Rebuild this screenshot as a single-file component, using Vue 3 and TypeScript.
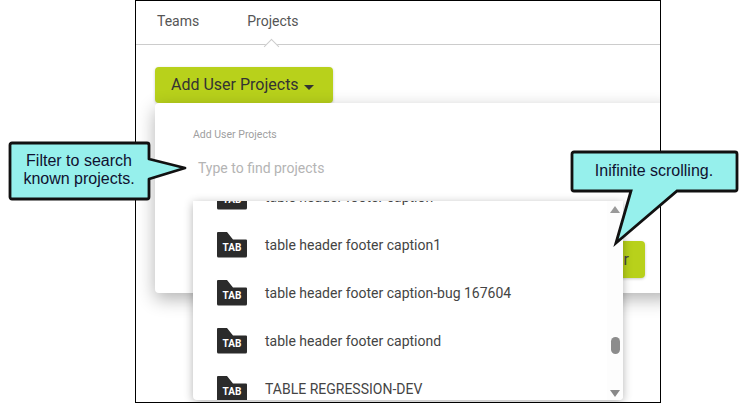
<script setup lang="ts">
const items: string[] = [
  'table header footer caption',
  'table header footer caption1',
  'table header footer caption-bug 167604',
  'table header footer captiond',
  'TABLE REGRESSION-DEV',
]
</script>

<template>
  <div class="root">
    <div class="frame">
      <nav class="tabs">
        <span class="tab">Teams</span>
        <span class="tab active">Projects</span>
      </nav>
      <div class="content">
        <button class="add">Add User Projects <i class="caret"></i></button>
        <section class="panel">
          <div class="label">Add User Projects</div>
          <div class="placeholder">Type to find projects</div>
          <div class="action"><span>r</span></div>
        </section>
        <div class="list">
          <div class="rows">
            <div v-for="item in items" :key="item" class="row">
              <span class="folder">
                <svg width="30" height="26" viewBox="0 0 30 26">
                  <path d="M1 0H10L16 7.500H29a1 1 0 0 1 1 1V24a1.500 1.500 0 0 1-1.500 1.500H1.500A1.500 1.500 0 0 1 0 24V1a1 1 0 0 1 1-1Z" fill="#2b2b2b" />
                </svg>
                <b>TAB</b>
              </span>
              <span class="name">{{ item }}</span>
            </div>
          </div>
          <div class="track">
            <i class="up"></i>
            <i class="thumb"></i>
            <i class="down"></i>
          </div>
        </div>
      </div>
    </div>

    <div class="callout left">
      <svg width="182" height="62" viewBox="0 0 182 62">
        <path d="M5 2H140a2 2 0 0 1 2 2V18L178 27 142 38V56a2 2 0 0 1-2 2H5a2 2 0 0 1-2-2V4a2 2 0 0 1 2-2Z" fill="#96f0ec" stroke="#111" stroke-width="2.800" stroke-linejoin="round" />
      </svg>
      <p>Filter to search<br />known projects.</p>
    </div>
    <div class="callout right">
      <svg width="170" height="100" viewBox="0 0 170 100">
        <path d="M4 2H165a2 2 0 0 1 2 2V39a2 2 0 0 1-2 2H107L46 93 61 41H4a2 2 0 0 1-2-2V4a2 2 0 0 1 2-2Z" fill="#96f0ec" stroke="#111" stroke-width="2.800" stroke-linejoin="miter" />
      </svg>
      <p>Inifinite scrolling.</p>
    </div>
  </div>
</template>

<style>
html, body { margin: 0; background: #fff; }
</style>

<style scoped>
.root {
  position: relative;
  width: 746px;
  height: 403px;
  overflow: hidden;
  background: #fff;
  font-family: Roboto, sans-serif;
}
.frame {
  box-sizing: border-box;
  width: 526px;
  height: 403px;
  margin-left: 135px;
  border: 1px solid #000;
  overflow: hidden;
  background: #fff;
}
.tabs {
  position: relative;
  display: flex;
  gap: 48px;
  height: 44px;
  padding: 12px 0 0 21px;
  box-sizing: border-box;
  border-bottom: 1px solid #ccc;
}
.tab { font-size: 14px; line-height: 16px; color: #555; }
.active { position: relative; }
.active::after {
  content: "";
  position: absolute;
  left: 19px;
  top: 28px;
  width: 10px;
  height: 10px;
  background: #fff;
  border-left: 1px solid #ccc;
  border-top: 1px solid #ccc;
  transform: rotate(45deg);
}
.content { position: relative; padding: 22px 0 0 19px; }
.add {
  display: block;
  box-sizing: border-box;
  width: 178px;
  height: 36px;
  padding: 0 0 0 16px;
  border: 0;
  border-radius: 4px;
  background: #b8d11b;
  box-shadow: 0 1px 3px rgba(0, 0, 0, .2);
  color: #333;
  font: 16px/36px Roboto, sans-serif;
  text-align: left;
}
.caret {
  display: inline-block;
  margin-left: 1px;
  vertical-align: 0;
  border-top: 5px solid #333;
  border-left: 5px solid transparent;
  border-right: 5px solid transparent;
}
.panel {
  position: absolute;
  left: 19px;
  top: 58px;
  width: 520px;
  height: 190px;
  border-radius: 4px;
  background: #fff;
  box-shadow: 0 6px 18px rgba(0, 0, 0, .3);
}
.label {
  position: absolute;
  left: 38px;
  top: 26px;
  font-size: 10.500px;
  line-height: 12px;
  color: #a0a0a0;
}
.placeholder {
  position: absolute;
  left: 43px;
  top: 57px;
  font-size: 14px;
  line-height: 16px;
  color: #b4b4b4;
}
.action {
  position: absolute;
  left: 440px;
  top: 138px;
  width: 50px;
  height: 37px;
  border-radius: 4px;
  background: #b8d11b;
  box-shadow: 0 1px 3px rgba(0, 0, 0, .2);
  color: #444;
  font-size: 16px;
  line-height: 37px;
  text-align: right;
  padding-right: 16px;
  box-sizing: border-box;
}
.list {
  position: absolute;
  left: 57px;
  top: 156px;
  width: 430px;
  height: 199px;
  display: flex;
  overflow: hidden;
  background: #fff;
  border-radius: 0 0 4px 4px;
  box-shadow: 0 2px 10px rgba(0, 0, 0, .3);
}
.rows { flex: 1; min-width: 0; padding-left: 24px; margin-top: -28px; }
.row {
  display: flex;
  align-items: center;
  gap: 18px;
  height: 48px;
}
.folder { position: relative; display: block; width: 30px; height: 26px; flex: none; }
.folder svg { display: block; }
.folder b {
  position: absolute;
  left: 0;
  right: 0;
  top: 10px;
  color: #fff;
  font: 700 10px/12px Roboto, sans-serif;
  text-align: center;
}
.name { font-size: 14px; line-height: 16px; color: #444; }
.track {
  position: relative;
  flex: none;
  width: 16px;
  background: #fdfdfd;
}
.track i { position: absolute; display: block; }
.up {
  left: 3px;
  top: 5px;
  border-bottom: 7px solid #999;
  border-left: 5px solid transparent;
  border-right: 5px solid transparent;
}
.down {
  left: 3px;
  bottom: 3px;
  border-top: 7px solid #888;
  border-left: 5px solid transparent;
  border-right: 5px solid transparent;
}
.thumb {
  left: 4px;
  top: 136px;
  width: 9px;
  height: 17px;
  border-radius: 5px;
  background: #8c8c8c;
}
.callout { position: absolute; }
.callout svg { display: block; }
.callout p {
  position: absolute;
  margin: 0;
  color: #101030;
  font: 16px/18px "Liberation Sans", Arial, sans-serif;
  text-align: center;
}
.left { left: 7px; top: 141px; }
.left p { left: 3px; top: 11px; width: 138px; }
.right { left: 570px; top: 150px; }
.right p { left: 2px; top: 12px; width: 164px; }
</style>
